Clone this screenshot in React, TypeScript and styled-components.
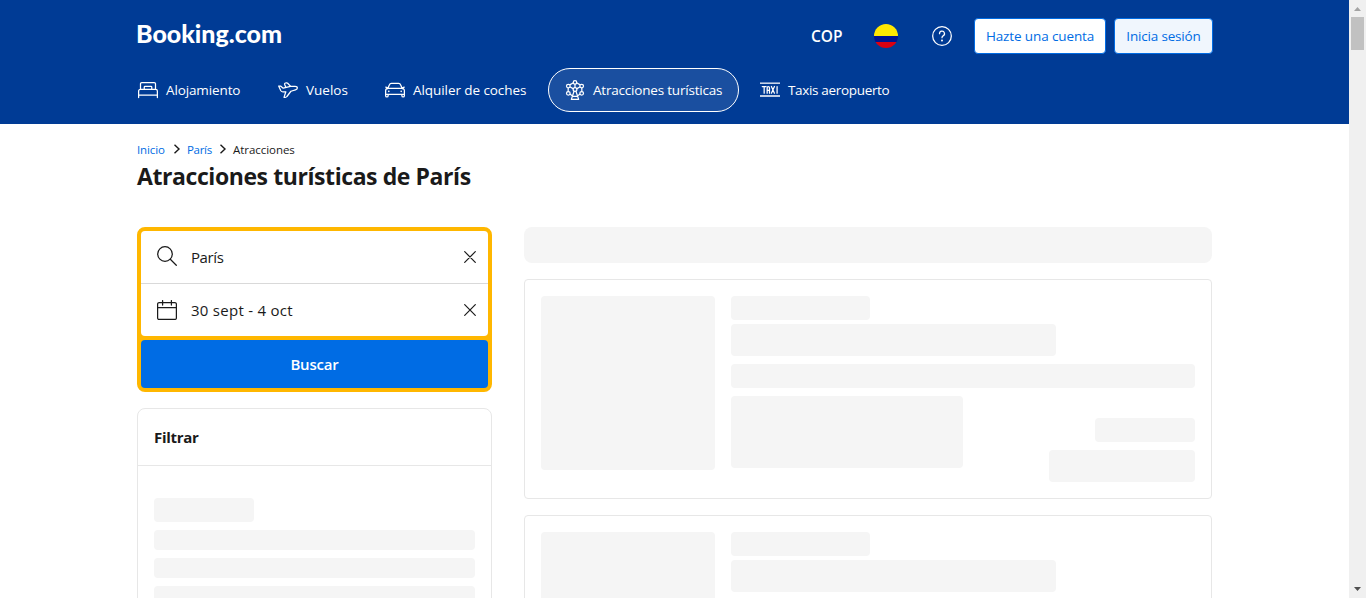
import React from "react";
import styled, { createGlobalStyle, css } from "styled-components";

const GlobalStyle = createGlobalStyle`
  * { box-sizing: border-box; }
  html, body { margin: 0; height: 100%; overflow: hidden; background: #fff; }
  body, button { font-family: "Open Sans", "Noto Sans", sans-serif; color: #1a1a1a; }
`;

const Viewport = styled.div`
  display: flex;
  height: 598px;
  overflow: hidden;
`;
const Page = styled.div`
  flex: 1;
  min-width: 0;
  height: 598px;
  overflow: hidden;
`;
const Header = styled.header`
  height: 124px;
  padding: 18px 136px 12px 137px;
  background: #003b95;
  color: #fff;
`;
const TopRow = styled.div`
  display: flex;
  justify-content: space-between;
  height: 36px;
`;
const Logo = styled.svg`
  display: block;
  width: 160px;
  height: 36px;
  overflow: visible;
  fill: #fff;
  font-family: Lato, sans-serif;
  font-weight: 900;
  font-size: 25.5px;
`;
const Actions = styled.div`
  display: flex;
  align-items: center;
`;
const Currency = styled.span`
  width: 63px;
  font-size: 15.5px;
  font-weight: 600;
`;
const Flag = styled.svg`
  width: 24px;
  height: 24px;
  margin-right: 34px;
`;
const Help = styled.svg`
  width: 20px;
  height: 20px;
  margin-right: 22px;
`;
const AuthButton = styled.button<{ $width: number; $soft?: boolean; $spacing: number }>`
  width: ${(p) => p.$width}px;
  height: 36px;
  margin-right: ${(p) => (p.$soft ? 0 : 8)}px;
  padding: 0 0 1px;
  border: 1px solid #006ce4;
  border-radius: 4px;
  background: ${(p) => (p.$soft ? "#f0f6fd" : "#fff")};
  color: #006ce4;
  font-size: 13.5px;
  letter-spacing: ${(p) => p.$spacing}px;
  white-space: nowrap;
`;
const Nav = styled.nav`
  display: flex;
  gap: 4px;
  margin: 14px 0 0 -16px;
`;
const NavItem = styled.a<{ $width: number; $active?: boolean; $spacing: number }>`
  display: flex;
  align-items: center;
  gap: 8px;
  width: ${(p) => p.$width}px;
  height: 44px;
  padding: 0 16px;
  border: 1px solid transparent;
  border-radius: 22px;
  font-size: 13.5px;
  letter-spacing: ${(p) => p.$spacing}px;
  white-space: nowrap;
  ${(p) =>
    p.$active &&
    css`
      border-color: #fff;
      background: #1a4fa0;
    `}
`;
const NavIcon = styled.svg`
  flex: none;
  width: 20px;
  height: 20px;
  fill: none;
  stroke: #fff;
  stroke-width: 1.5;
  stroke-linecap: round;
  stroke-linejoin: round;
`;
const Content = styled.main`
  padding: 16px 137px 0;
`;
const Breadcrumb = styled.div`
  display: flex;
  align-items: center;
  height: 18px;
  font-size: 11.5px;
`;
const Crumb = styled.span<{ $width: number; $link?: boolean; $spacing: number }>`
  width: ${(p) => p.$width}px;
  color: ${(p) => (p.$link ? "#006ce4" : "#1a1a1a")};
  letter-spacing: ${(p) => p.$spacing}px;
  white-space: nowrap;
`;
const Chevron = styled.svg`
  width: 8px;
  height: 10px;
  margin-right: 6px;
  fill: none;
  stroke: #1a1a1a;
  stroke-width: 1.4;
`;
const Title = styled.h1`
  margin: 2px 0 0;
  height: 32px;
  font-size: 23px;
  line-height: 32px;
  font-weight: 700;
  letter-spacing: -0.42px;
  white-space: nowrap;
`;
const Columns = styled.div`
  display: grid;
  grid-template-columns: 355px 688px;
  column-gap: 32px;
  margin-top: 35px;
`;
const SearchBox = styled.form`
  border: 4px solid #ffb700;
  border-radius: 8px;
  background: #ffb700;
`;
const Field = styled.div<{ $first?: boolean }>`
  display: flex;
  align-items: center;
  height: ${(p) => (p.$first ? 53 : 52)}px;
  padding: 0 12px 0 16px;
  border-bottom: ${(p) => (p.$first ? "1px solid #d9d9d9" : "0")};
  border-radius: ${(p) => (p.$first ? "4px 4px 0 0" : "0 0 4px 4px")};
  background: #fff;
`;
const FieldIcon = styled.svg<{ $raise?: number }>`
  width: 20px;
  height: 20px;
  margin-bottom: ${(p) => (p.$raise ?? 0) * 2}px;
  fill: none;
  stroke: #1a1a1a;
  stroke-width: 1.25;
  stroke-linecap: round;
  stroke-linejoin: round;
`;
const FieldValue = styled.span<{ $spacing: number }>`
  flex: 1;
  padding-left: 14px;
  font-size: 15px;
  letter-spacing: ${(p) => p.$spacing}px;
`;
const Clear = styled.svg`
  width: 12px;
  height: 12px;
  stroke: #1a1a1a;
  stroke-width: 1.2;
  stroke-linecap: round;
`;
const SearchButton = styled.button`
  display: block;
  width: 100%;
  height: 48px;
  margin-top: 4px;
  padding: 0;
  border: 0;
  border-radius: 4px;
  background: #006ce4;
  color: #fff;
  font-size: 15px;
  font-weight: 600;
  letter-spacing: -0.2px;
`;
const FilterPanel = styled.section`
  height: 300px;
  margin-top: 16px;
  border: 1px solid #e7e7e7;
  border-radius: 8px;
`;
const FilterTitle = styled.h2`
  height: 57px;
  margin: 0;
  padding-left: 16px;
  border-bottom: 1px solid #e7e7e7;
  font-size: 15px;
  line-height: 57px;
  font-weight: 700;
  letter-spacing: -0.3px;
`;
const FilterBody = styled.div`
  display: flex;
  flex-direction: column;
  gap: 8px;
  padding: 32px 16px 0;
`;
const Bone = styled.div<{ $w?: number; $h: number; $radius?: number }>`
  flex: none;
  width: ${(p) => (p.$w ? `${p.$w}px` : "100%")};
  height: ${(p) => p.$h}px;
  border-radius: ${(p) => p.$radius ?? 4}px;
  background: #f5f5f5;
`;
const Results = styled.section`
  display: flex;
  flex-direction: column;
  gap: 16px;
`;
const Card = styled.article`
  display: flex;
  gap: 16px;
  height: 220px;
  padding: 16px;
  border: 1px solid #e7e7e7;
  border-radius: 4px;
`;
const CardText = styled.div`
  display: flex;
  flex-direction: column;
  flex: 1;
`;
const Lines = styled.div`
  display: grid;
  row-gap: 8px;
`;
const Heading = styled.div`
  display: grid;
  row-gap: 4px;
`;
const CardFooter = styled.div`
  display: flex;
  justify-content: space-between;
  margin-top: 8px;
`;
const Price = styled.div`
  display: flex;
  flex-direction: column;
  align-items: flex-end;
  gap: 8px;
  padding-top: 22px;
`;
const Scrollbar = styled.aside`
  display: flex;
  flex-direction: column;
  align-items: center;
  width: 17px;
  height: 598px;
  background: #f0f0f0;
`;
const ScrollArrow = styled.svg`
  display: block;
  width: 17px;
  height: 17px;
`;
const Thumb = styled.div`
  width: 13px;
  height: 33px;
  margin-bottom: auto;
  background: #c1c1c1;
`;

const BedIcon = () => (
  <NavIcon viewBox="0 0 24 24">
    <path d="M.75 21v-7.75a2 2 0 0 1 2-2h18.5a2 2 0 0 1 2 2V21M.75 18h22.500M3 11.250V4.500A1.500 1.500 0 0 1 4.500 3h15A1.500 1.500 0 0 1 21 4.500v6.750M7.500 11.250V8.500a1 1 0 0 1 1-1h7a1 1 0 0 1 1 1v2.750" />
  </NavIcon>
);
const PlaneIcon = () => (
  <NavIcon viewBox="0 0 24 24">
    <path d="M.8 7.300h2.300l3.100 2.500 8.800-2.200h5.500c1.700 0 2.700.8 2.700 2 0 1.100-.8 1.900-2.200 2.300L15.500 13.500l-4.800 6.300c-.5.700-1.200 1-2 1H7.200l2.200-6.700-3.200.2c-1.200.1-2.100-.4-2.800-1.400L.8 7.300Z" />
    <path d="M9.500 8.900 8 5.300c-.3-.9.100-1.500 1-1.700l1.200-.2c.6-.1 1 .1 1.400.5l3.600 3.700" />
  </NavIcon>
);
const CarIcon = () => (
  <NavIcon viewBox="0 0 24 24">
    <path d="M3.200 10.500 5.300 5.600A2.500 2.500 0 0 1 7.600 4h8.800a2.500 2.500 0 0 1 2.300 1.600l2.100 4.900M3.500 10h17a2.750 2.750 0 0 1 2.750 2.750v4.500H.75v-4.500A2.750 2.750 0 0 1 3.500 10ZM.75 17.250v1.500a1.500 1.500 0 0 0 3 0v-1.500M20.250 17.250v1.500a1.500 1.500 0 0 0 3 0v-1.500M1 8.500l2.300 1.200M23 8.500l-2.300 1.200" />
    <path d="M4.500 13.600h.1M19.400 13.600h.1" strokeWidth="2" />
  </NavIcon>
);
const WheelIcon = () => (
  <NavIcon viewBox="0 0 24 24">
    <circle cx="12" cy="2.900" r="2.100" />
    <circle cx="4" cy="7.300" r="2.200" />
    <circle cx="20" cy="7.300" r="2.200" />
    <circle cx="4" cy="16" r="2.200" />
    <circle cx="20" cy="16" r="2.200" />
    <circle cx="12" cy="11.500" r="2.250" />
    <path d="M9.700 3.600 6.200 5.500M14.300 3.600 17.800 5.500M3.800 9.600v4.200M20.200 9.600v4.200M6.200 17l2.600 1.800M17.800 17l-2.600 1.800M10.800 13.700 7.600 23.200h8.800L13.200 13.700M12 5.200v3.800M6.200 8.400l3.500 2M17.800 8.400l-3.500 2M9.200 19.500h5.600" />
  </NavIcon>
);
const TaxiIcon = () => (
  <NavIcon viewBox="0 0 24 24">
    <path d="M0 3.800h24" strokeLinecap="butt" />
    <path d="M0 19.200h24" strokeLinecap="butt" strokeWidth="2.400" strokeOpacity=".75" />
    <path d="M2.700 7.800h4.600M5 7.800v8M8.600 15.800V9.300q0-1.500 1.400-1.500t1.400 1.500v6.500M8.600 12.500h2.800M13.700 7.800l3.600 8M17.300 7.800l-3.600 8M20.500 7.800v8" strokeWidth="1.500" />
  </NavIcon>
);

const navItems = [
  { label: "Alojamiento", width: 136, spacing: -0.12, Icon: BedIcon },
  { label: "Vuelos", width: 103, spacing: 0, Icon: PlaneIcon },
  { label: "Alquiler de coches", width: 176, spacing: -0.07, Icon: CarIcon },
  { label: "Atracciones turísticas", width: 191, spacing: -0.2, Icon: WheelIcon, active: true },
  { label: "Taxis aeropuerto", width: 164, spacing: -0.33, Icon: TaxiIcon },
];

const ClearIcon = () => (
  <Clear viewBox="0 0 12 12">
    <path d="M.7.7l10.600 10.600M11.300.7.7 11.300" />
  </Clear>
);

const SkeletonCard = () => (
  <Card>
    <Bone $w={174} $h={174} />
    <CardText>
      <Lines>
        <Heading>
          <Bone $w={139} $h={24} />
          <Bone $w={325} $h={32} />
        </Heading>
        <Bone $h={24} />
      </Lines>
      <CardFooter>
        <Bone $w={232} $h={72} />
        <Price>
          <Bone $w={100} $h={24} />
          <Bone $w={146} $h={32} />
        </Price>
      </CardFooter>
    </CardText>
  </Card>
);

export default function App() {
  return (
    <Viewport>
      <GlobalStyle />
      <Page>
        <Header>
          <TopRow>
            <Logo viewBox="0 0 160 36">
              <text x="-1" y="25" textLength="146" lengthAdjust="spacingAndGlyphs">Booking.com</text>
            </Logo>
            <Actions>
              <Currency>COP</Currency>
              <Flag viewBox="0 0 24 24">
                <clipPath id="disc"><circle cx="12" cy="12" r="12" /></clipPath>
                <g clipPath="url(#disc)">
                  <path fill="#ffe800" d="M0 0h24v12H0z" />
                  <path fill="#00148e" d="M0 12h24v6H0z" />
                  <path fill="#da0010" d="M0 18h24v6H0z" />
                </g>
              </Flag>
              <Help viewBox="0 0 24 24" fill="none" stroke="#fff" strokeWidth="1.500" strokeLinecap="round">
                <circle cx="12" cy="12" r="11.200" />
                <path d="M9 9.200a3 3 0 1 1 4.300 2.700c-.9.500-1.300 1-1.300 2.100" />
                <circle cx="12" cy="17.300" r=".5" fill="#fff" />
              </Help>
              <AuthButton $width={132} $spacing={-0.12}>Hazte una cuenta</AuthButton>
              <AuthButton $width={99} $spacing={-0.18} $soft>Inicia sesión</AuthButton>
            </Actions>
          </TopRow>
          <Nav>
            {navItems.map(({ label, width, spacing, Icon, active }) => (
              <NavItem key={label} $width={width} $spacing={spacing} $active={active}>
                <Icon />
                <span>{label}</span>
              </NavItem>
            ))}
          </Nav>
        </Header>
        <Content>
          <Breadcrumb>
            <Crumb $width={36} $spacing={-0.1} $link>Inicio</Crumb>
            <Chevron viewBox="0 0 8 10"><path d="M1.500.7 6 5 1.500 9.300" /></Chevron>
            <Crumb $width={32} $spacing={-0.3} $link>París</Crumb>
            <Chevron viewBox="0 0 8 10"><path d="M1.500.7 6 5 1.500 9.300" /></Chevron>
            <Crumb $width={70} $spacing={-0.05}>Atracciones</Crumb>
          </Breadcrumb>
          <Title>Atracciones turísticas de París</Title>
          <Columns>
            <div>
              <SearchBox>
                <Field $first>
                  <FieldIcon $raise={1} viewBox="0 0 20 20">
                    <circle cx="8" cy="8" r="7.300" />
                    <path d="m13.300 13.300 6 6" />
                  </FieldIcon>
                  <FieldValue $spacing={-0.4}>París</FieldValue>
                  <ClearIcon />
                </Field>
                <Field>
                  <FieldIcon viewBox="0 0 20 20">
                    <rect x=".6" y="2.600" width="18.800" height="16.800" rx="1.500" />
                    <path d="M.6 7.600h18.800M5.600.6v4.400M14.400.6v4.400" />
                  </FieldIcon>
                  <FieldValue $spacing={0.27}>30 sept - 4 oct</FieldValue>
                  <ClearIcon />
                </Field>
                <SearchButton type="button">Buscar</SearchButton>
              </SearchBox>
              <FilterPanel>
                <FilterTitle>Filtrar</FilterTitle>
                <FilterBody>
                  <Bone $w={100} $h={24} />
                  <Bone $h={20} />
                  <Bone $h={20} />
                  <Bone $h={20} />
                </FilterBody>
              </FilterPanel>
            </div>
            <Results>
              <Bone $h={36} $radius={8} />
              <SkeletonCard />
              <SkeletonCard />
            </Results>
          </Columns>
        </Content>
      </Page>
      <Scrollbar>
        <ScrollArrow viewBox="0 0 17 17"><path d="M5 11h7L8.500 7z" fill="#a3a3a3" /></ScrollArrow>
        <Thumb />
        <ScrollArrow viewBox="0 0 17 17"><path d="M5 6h7l-3.500 4z" fill="#505050" /></ScrollArrow>
      </Scrollbar>
    </Viewport>
  );
}
